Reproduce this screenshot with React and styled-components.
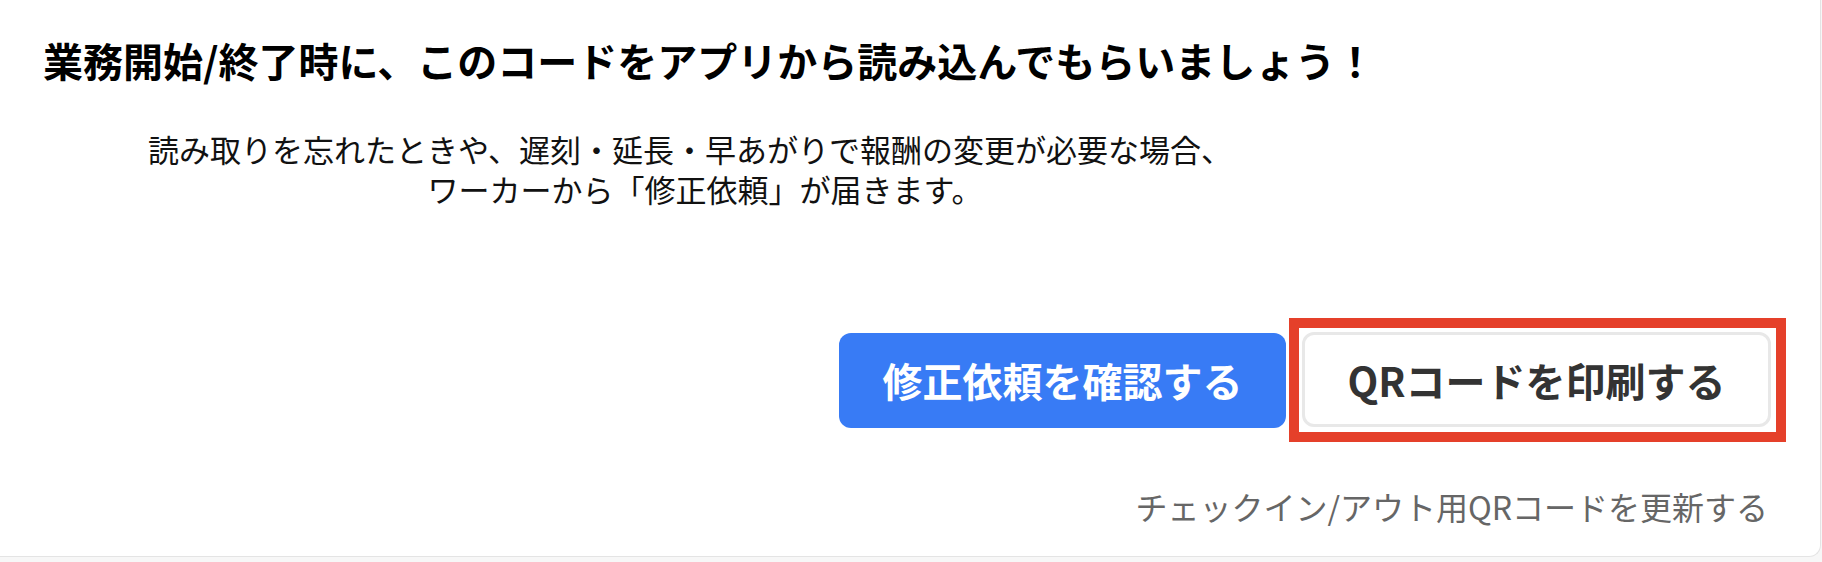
import React from "react";
import styled, { createGlobalStyle } from "styled-components";

const GlobalStyle = createGlobalStyle`
  html, body {
    margin: 0;
    padding: 0;
    background: #f7f7f7;
  }
  body {
    font-family: "Noto Sans CJK JP", "Noto Sans", sans-serif;
    color: #111;
  }
`;

const Card = styled.section`
  box-sizing: border-box;
  width: 1821px;
  height: 557px;
  background: #fff;
  border-right: 1px solid #e4e4e4;
  border-bottom: 1px solid #e4e4e4;
  border-bottom-right-radius: 12px;
  padding-top: 31px;
  display: flex;
  flex-direction: column;
`;

const Title = styled.h2`
  margin: 0;
  padding-left: 43px;
  font-size: 40px;
  line-height: 58px;
  font-weight: 700;
  color: #000;
`;

const Lead = styled.div`
  margin: 40px 0 0 43px;
  width: 1294px;
  text-align: center;
  font-size: 31px;
  line-height: 40px;
  color: #111;
`;

const LeadLine = styled.div`
  padding-left: ${p => p.shift || 0}px;
`;

const Actions = styled.div`
  display: flex;
  justify-content: flex-end;
  align-items: center;
  gap: 3px;
  margin-top: 109px;
  padding-right: 34px;
`;

const Button = styled.button`
  box-sizing: border-box;
  height: 95px;
  padding: 0;
  border-radius: 12px;
  font-family: inherit;
  font-size: 40px;
  font-weight: 700;
  cursor: pointer;
  border: ${p => (p.primary ? "none" : "3px solid #e8e8e8")};
  background: ${p => (p.primary ? "#387bf5" : "#fff")};
  color: ${p => (p.primary ? "#fff" : "#333")};
  width: ${p => p.w}px;
`;

const Highlight = styled.div`
  border: 10px solid #e5402a;
  padding: 4px 5px 5px 3px;
  display: flex;
`;

const UpdateLink = styled.a`
  align-self: flex-end;
  margin-top: 44px;
  padding-right: 52px;
  font-size: 32px;
  line-height: 40px;
  color: #666;
  text-decoration: none;
  cursor: pointer;
`;

export default function App() {
  return (
    <>
      <GlobalStyle />
      <Card>
        <Title>業務開始/終了時に、このコードをアプリから読み込んでもらいましょう！</Title>
        <Lead>
          <LeadLine>読み取りを忘れたときや、遅刻・延長・早あがりで報酬の変更が必要な場合、</LeadLine>
          <LeadLine shift={30}>ワーカーから「修正依頼」が届きます。</LeadLine>
        </Lead>
        <Actions>
          <Button primary w={447}>修正依頼を確認する</Button>
          <Highlight>
            <Button w={469}>QRコードを印刷する</Button>
          </Highlight>
        </Actions>
        <UpdateLink>チェックイン/アウト用QRコードを更新する</UpdateLink>
      </Card>
    </>
  );
}
